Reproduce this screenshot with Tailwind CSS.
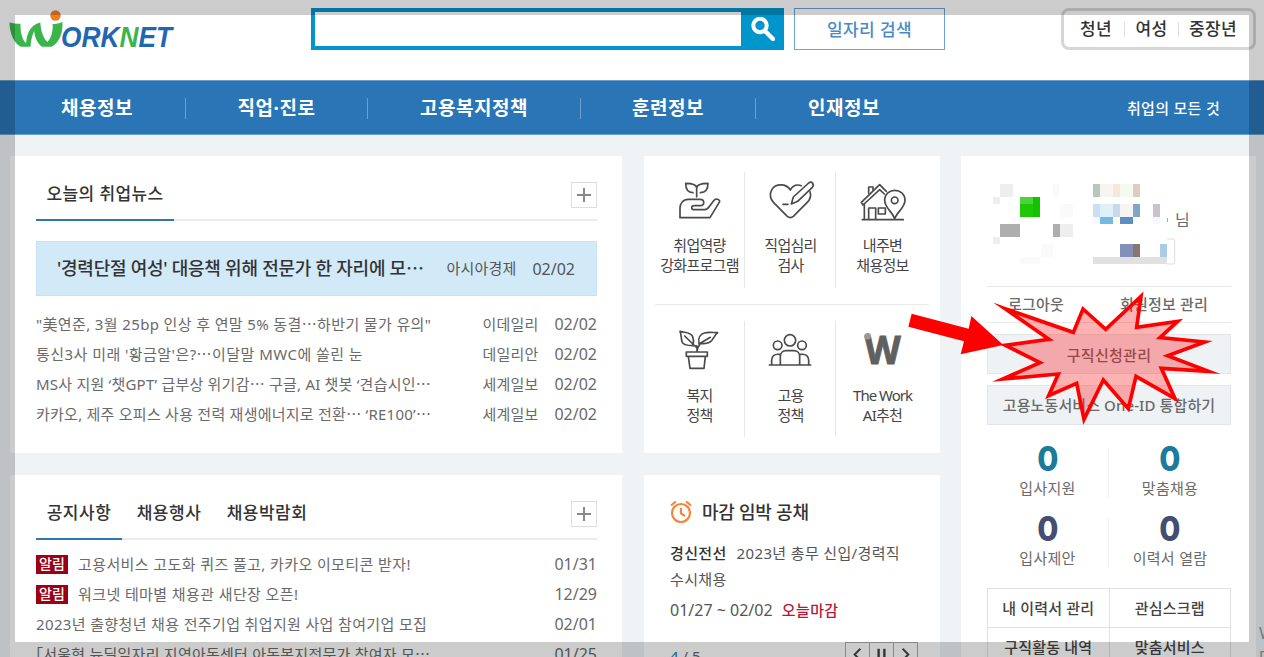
<!DOCTYPE html>
<html lang="ko">
<head>
    <meta charset="UTF-8">
    <meta name="viewport" content="width=device-width, initial-scale=1.0">
    <title>워크넷</title>
    <script src="https://cdn.jsdelivr.net/npm/@tailwindcss/browser@4"></script>
</head>
<body class="bg-[#eff3f6] font-['Noto_Sans','Noto_Sans_CJK_KR',sans-serif] text-[#6a6a6a] overflow-hidden">
<div class="relative w-[1264px] h-[657px] overflow-hidden">

    <!-- 헤더 -->
    <header class="flex h-20 bg-white pt-2 pl-[9px]">
        <svg class="w-[170px] h-[42px] shrink-0" viewBox="9 8 170 42">
            <path fill="#39b54a" d="M9.500 22.500c3.500 1 7 1.200 11 1.300-.2 8 1.500 15.500 5.500 19.500 1-10 4-18 14-20.800-5.500 6-8.700 13-9.500 24.300h-9.500c-7-3-11.500-14-11.500-24.300z"/>
            <path fill="#39b54a" d="M34 29c1.500-3 3.500-5 6.300-6.500.5 8 2.500 15 7.200 19.500 4-4.500 5.500-11 5.200-18 3.500 0 6.500-.6 9.800-2 .5 11-3 20.500-11 24.800H42c-5-4-7.500-9.500-8-17.800z"/>
            <circle cx="55.500" cy="15.500" r="5.200" fill="#f47b20"/>
            <text x="61" y="47" font-family="Liberation Sans" font-size="29" font-weight="700" font-style="italic" fill="#2167b0" textLength="111" lengthAdjust="spacingAndGlyphs">ORK<tspan fill="#39b54a">N</tspan>ET</text>
        </svg>
        <div class="flex ml-[132px] w-[473px] h-[42px] border-4 border-r-0 border-[#0095cb]">
            <input type="text" class="flex-1 outline-none">
            <button class="w-[43px] -my-1 bg-[#0095cb] flex items-center justify-center">
                <svg class="w-6 h-6" viewBox="0 0 24 24" fill="none" stroke="#fff">
                    <circle cx="9" cy="8.500" r="6.700" stroke-width="4"/>
                    <path d="M14 14l8 8" stroke-width="4.500" stroke-linecap="round"/>
                </svg>
            </button>
        </div>
        <button class="ml-[10px] w-[151px] h-[42px] border-[1.5px] border-[#6ba3d6] text-[17px] leading-none font-medium tracking-[.4px] text-[#4b8ac9]">일자리 검색</button>
        <div class="flex items-center ml-[116px] w-[195px] h-[42px] border-[3px] border-[#d6d6d6] rounded-lg pr-[6px] text-[17px] font-medium tracking-[.3px] text-[#333]">
            <span class="w-[60px] pl-4">청년</span>
            <i class="w-px h-[15px] bg-[#ddd]"></i>
            <span class="w-[53px] text-center">여성</span>
            <i class="w-px h-[15px] bg-[#ddd]"></i>
            <span class="flex-1 text-center">중장년</span>
        </div>
    </header>

    <!-- 메인 메뉴 -->
    <nav class="flex items-center h-[55px] pt-px pl-[9px] pr-11 bg-[#2a75b5] border-y border-[#6b9fcc] text-white text-[19px] font-bold tracking-[.5px] text-center">
        <a class="w-[176px]">채용정보</a>
        <i class="w-px h-[21px] bg-[#6b9fcc]"></i>
        <a class="w-[181px]">직업·진로</a>
        <i class="w-px h-[21px] bg-[#6b9fcc]"></i>
        <a class="w-[212px]">고용복지정책</a>
        <i class="w-px h-[21px] bg-[#6b9fcc]"></i>
        <a class="w-[174px]">훈련정보</a>
        <i class="w-px h-[21px] bg-[#6b9fcc]"></i>
        <a class="w-[176px]">인재정보</a>
        <a class="ml-auto text-[15px] font-medium tracking-[.3px]">취업의 모든 것</a>
    </nav>

    <main class="flex pt-[21px] pl-[10px]">
        <!-- 왼쪽: 뉴스, 공지 -->
        <div class="w-[612px] space-y-[22px]">
            <section class="h-[297px] bg-white pl-[26px] pr-[25px]">
                <div class="flex justify-between h-[65px] bg-[linear-gradient(#ebebeb,#ebebeb)] bg-[length:100%_2px] bg-[position:0_63px] bg-no-repeat">
                    <h2 class="w-[138px] pt-[26px] text-center text-[17px] leading-6 font-medium tracking-[.4px] text-[#333] border-b-2 border-[#2f76b5]">오늘의 취업뉴스</h2>
                    <button class="mt-[26px] w-[26px] h-[26px] border border-[#ddd] flex items-center justify-center">
                        <svg class="w-[14px] h-[14px]" viewBox="0 0 14 14" stroke="#888" stroke-width="2"><path d="M7 0v14M0 7h14"/></svg>
                    </button>
                </div>
                <div class="flex items-center mt-[20px] h-[55px] bg-[#d2e9f8] border border-[#c6e2f4] pl-[20px] pr-[21px] text-[15px] text-[#555]">
                    <b class="flex-1 text-[18px] font-medium tracking-[-.25px] text-[#333] whitespace-nowrap">'경력단절 여성' 대응책 위해 전문가 한 자리에 모⋯</b>
                    <span class="mr-4 tracking-[.2px]">아시아경제</span>
                    <span class="text-[16px]">02/02</span>
                </div>
                <ul class="mt-[13px] text-[15px] leading-[30px] whitespace-nowrap">
                    <li class="flex"><span class="flex-1 tracking-[.37px]">"美연준, 3월 25bp 인상 후 연말 5% 동결⋯하반기 물가 유의"</span><span class="mr-4 tracking-[.2px]">이데일리</span><span class="text-[16px]">02/02</span></li>
                    <li class="flex"><span class="flex-1 tracking-[.45px]">통신3사 미래 '황금알'은?⋯이달말 MWC에 쏠린 눈</span><span class="mr-4 tracking-[.2px]">데일리안</span><span class="text-[16px]">02/02</span></li>
                    <li class="flex"><span class="flex-1 tracking-[.22px]">MS사 지원 ‘챗GPT’ 급부상 위기감⋯ 구글, AI 챗봇 ‘견습시인⋯</span><span class="mr-4 tracking-[.2px]">세계일보</span><span class="text-[16px]">02/02</span></li>
                    <li class="flex"><span class="flex-1 tracking-[.25px]">카카오, 제주 오피스 사용 전력 재생에너지로 전환⋯ ‘RE100’⋯</span><span class="mr-4 tracking-[.2px]">세계일보</span><span class="text-[16px]">02/02</span></li>
                </ul>
            </section>

            <section class="h-[297px] bg-white pl-[26px] pr-[25px]">
                <div class="flex h-[65px] bg-[linear-gradient(#ebebeb,#ebebeb)] bg-[length:100%_2px] bg-[position:0_63px] bg-no-repeat text-[17px] leading-6 font-medium tracking-[.5px] text-[#333] text-center">
                    <h2 class="w-[86px] pt-[26px] border-b-2 border-[#2f76b5]">공지사항</h2>
                    <h2 class="w-[94px] pt-[26px]">채용행사</h2>
                    <h2 class="w-[102px] pt-[26px]">채용박람회</h2>
                    <button class="ml-auto mt-[26px] w-[26px] h-[26px] border border-[#ddd] flex items-center justify-center">
                        <svg class="w-[14px] h-[14px]" viewBox="0 0 14 14" stroke="#888" stroke-width="2"><path d="M7 0v14M0 7h14"/></svg>
                    </button>
                </div>
                <ul class="mt-[9px] text-[15px] leading-[30px] whitespace-nowrap">
                    <li class="flex items-center"><em class="w-8 h-[19px] mr-[10px] bg-[#9b0014] text-center not-italic text-[14px] font-medium leading-[18px] text-white">알림</em><span class="flex-1 tracking-[.4px]">고용서비스 고도화 퀴즈 풀고, 카카오 이모티콘 받자!</span><span class="text-[16px]">01/31</span></li>
                    <li class="flex items-center"><em class="w-8 h-[19px] mr-[10px] bg-[#9b0014] text-center not-italic text-[14px] font-medium leading-[18px] text-white">알림</em><span class="flex-1 tracking-[.4px]">워크넷 테마별 채용관 새단장 오픈!</span><span class="text-[16px]">12/29</span></li>
                    <li class="flex"><span class="flex-1 tracking-[.36px]">2023년 출향청년 채용 전주기업 취업지원 사업 참여기업 모집</span><span class="text-[16px]">02/01</span></li>
                    <li class="flex"><span class="flex-1 -ml-2 tracking-[.24px]">「서울형 뉴딜일자리 지역아동센터 아동복지전문가 참여자 모⋯</span><span class="text-[16px]">01/25</span></li>
                </ul>
            </section>
        </div>

        <!-- 가운데: 바로가기, 마감 임박 -->
        <div class="ml-[22px] w-[296px] space-y-[22px]">
            <section class="h-[297px] bg-white pt-4 px-[11px] text-center text-[15px] leading-5 tracking-[-.7px] text-[#444]">
                <div class="grid grid-cols-[90px_91px_92px] h-[116px] divide-x divide-[#e8e8e8]">
                    <a class="flex flex-col items-center pt-2">
                        <svg class="w-[50px] h-11 mb-[11px] shrink-0" viewBox="106 90 150 132" fill="none" stroke="#4a4a4a" stroke-width="5" stroke-linejoin="round" stroke-linecap="round">
                            <path d="M171 140v-26c0-8-9-14-33-14 0 18 8 28 22 28M171 114c0-8 11-14 34-14 0 18-8 28-23 28"/>
                            <path d="M121 203v-28c0-15 9-27 25-27h35c15 0 15 19 0 19h-16c-12 0-12 12 0 12h31c7 0 10-5 14-11l12-16c6-8 18-4 18 3l-29 48z"/>
                        </svg>
                        취업역량<span class="-mx-2 whitespace-nowrap">강화프로그램</span>
                    </a>
                    <a class="flex flex-col items-center pt-2 pl-px">
                        <svg class="w-[50px] h-11 mb-[11px] shrink-0" viewBox="378 90 150 132" fill="none" stroke="#4a4a4a" stroke-width="5" stroke-linejoin="round" stroke-linecap="round">
                            <path d="M484 107c-15-5-27 2-33 13-14-22-45-18-55-2-9 14-5 30 5 40l41 41c6 5 12 5 18 0l41-41c9-9 13-21 9-33M429 163h15"/>
                            <path d="M454 162l6-21 46-42c10-7 18 4 11 13l-44 42z"/>
                        </svg>
                        직업심리<br>검사
                    </a>
                    <a class="flex flex-col items-center pt-2 pl-px">
                        <svg class="w-[50px] h-11 mb-[11px] shrink-0" viewBox="653 90 150 132" fill="none" stroke="#4a4a4a" stroke-width="5" stroke-linejoin="round" stroke-linecap="round">
                            <path d="M666 209h123M672 163v45M685 208v-34h21v34M714 174h21v18h-21zM685 130v-19h13v9"/>
                            <path d="M668 165l-5-8 55-53 20 20M668 165l50-46 14 13"/>
                            <path d="M763 207c-5-20-30-33-30-56 0-40 61-40 61 0 0 23-26 36-31 56z"/>
                            <circle cx="763" cy="151" r="10"/>
                        </svg>
                        내주변<br>채용정보
                    </a>
                </div>
                <div class="h-px mt-4 mb-4 bg-[#e8e8e8]"></div>
                <div class="grid grid-cols-[90px_91px_92px] h-[116px] divide-x divide-[#e8e8e8]">
                    <a class="flex flex-col items-center pt-2">
                        <svg class="w-[50px] h-11 mb-[12px] shrink-0" viewBox="105 86 150 132" fill="none" stroke="#4a4a4a" stroke-width="5" stroke-linejoin="round" stroke-linecap="round">
                            <path d="M171 153v-16c-8-3-41 4-45-13-3-11-2-22-6-31 16 5 31 1 38 16 3 8 3 18 1 25M134 107l37 36M171 153c0-8 3-14 8-20M177 128c-3-14 3-26 16-30 12-4 27-1 40-1-11 8-12 21-23 28-9 6-24 5-33 5zM177 131l34-20"/>
                            <path d="M139 155h63v13h-63zM145 168l5 36h42l4-36"/>
                        </svg>
                        복지<br>정책
                    </a>
                    <a class="flex flex-col items-center pt-2 pl-px">
                        <svg class="w-[50px] h-11 mb-[12px] shrink-0" viewBox="379 86 150 132" fill="none" stroke="#4a4a4a" stroke-width="5" stroke-linejoin="round" stroke-linecap="round">
                            <circle cx="451" cy="120" r="17"/><circle cx="414" cy="135" r="13"/><circle cx="487" cy="135" r="13"/>
                            <path d="M389 194h124M396 194v-14c0-12 7-20 24-18M507 194v-14c0-12-7-20-24-18M422 194v-26c0-10 7-17 17-17h24c10 0 17 7 17 17v26"/>
                        </svg>
                        고용<br>정책
                    </a>
                    <a class="flex flex-col items-center pt-2 pl-px">
                        <svg class="w-[50px] h-11 mb-[12px] shrink-0" viewBox="653 86 150 132">
                            <text x="673" y="191" font-family="Noto Sans" font-size="117" font-weight="700" fill="#606060" stroke="#606060" stroke-width="3" letter-spacing="0" textLength="108" lengthAdjust="spacingAndGlyphs">W</text>
                            <circle cx="682" cy="108" r="10" fill="#999"/>
                        </svg>
                        <span class="tracking-[-1px]">The Work</span>AI추천
                    </a>
                </div>
            </section>

            <section class="h-[297px] bg-white pt-6 pl-[26px] pr-[22px] text-[15px]">
                <h2 class="flex items-center h-[26px] text-[18px] font-medium tracking-[-.25px] text-[#333]">
                    <svg class="w-[22px] h-[22px] mr-[10px]" viewBox="0 0 22 22" fill="none" stroke="#f5853b" stroke-width="2.200">
                        <circle cx="11" cy="12" r="9"/><path d="M11 7v5.500l4 2.500M1 4.500l5-4M21 4.500l-5-4" stroke-width="2.200"/>
                    </svg>
                    마감 임박 공채
                </h2>
                <p class="mt-[15px] leading-[26px] tracking-[.35px] text-[#555] whitespace-nowrap"><b class="mr-[10px] font-medium text-[#333]">경신전선</b>2023년 총무 신입/경력직<br>수시채용</p>
                <p class="mt-[5px] leading-[26px] text-[16px] text-[#555] whitespace-nowrap">01/27 ~ 02/02 <b class="ml-[5px] text-[15px] font-medium tracking-[.4px] text-[#b5183a]">오늘마감</b></p>
                <div class="flex justify-between mt-[19px]">
                    <span class="pt-[3px]"><span class="text-[#2a75b5]">4</span> / 5</span>
                    <div class="flex w-[73px] h-[25px] border border-[#aaa] divide-x divide-[#aaa]">
                        <svg class="flex-1" viewBox="0 0 24 24" fill="none" stroke="#444" stroke-width="2"><path d="M15 6l-6 6 6 6"/></svg>
                        <svg class="flex-1" viewBox="0 0 24 24" fill="none" stroke="#444" stroke-width="2.500"><path d="M9 6v10M15 6v10"/></svg>
                        <svg class="flex-1" viewBox="0 0 24 24" fill="none" stroke="#444" stroke-width="2"><path d="M9 6l6 6-6 6"/></svg>
                    </div>
                </div>
            </section>
        </div>

        <!-- 오른쪽: 회원 정보 -->
        <section class="ml-[21px] w-[295px] h-[520px] bg-white pl-[26px] pr-[25px] pt-7">
            <div class="relative h-[103px] border-b border-[#e8e8e8]">
                <!-- 모자이크 처리된 프로필 -->
                <svg class="w-[244px] h-[92px]" viewBox="111 102 732 276" shape-rendering="crispEdges">
                    <path fill="#eee" d="M150 102h39v39h-39zM129 141h21v20h-21zM330 222h39v39h-39zM129 261h21v21h-21z"/>
                    <path fill="#fafafa" d="M309 102h18v39h-18zM330 162h39v39h-39zM210 321h60v21h-60zM273 282h36v39h-36z"/>
                    <path fill="#4bd43a" d="M210 141h39v21h-39z"/>
                    <path fill="#1ec806" d="M210 162h39v39h-39z"/>
                    <path fill="#12c400" d="M249 141h21v60h-21z"/>
                    <path fill="#aeaeae" d="M150 222h60v39h-60zM309 222h21v39h-21z"/>
                    <path fill="#b5c8bd" d="M429 102h21v39h-21z"/>
                    <path fill="#f8f4f1" d="M450 102h39v39h-39zM510 162h39v39h-39z"/>
                    <path fill="#f5e8d8" d="M489 102h21v39h-21z"/>
                    <path fill="#f5faf0" d="M510 102h39v39h-39z"/>
                    <path fill="#dccdc0" d="M549 102h21v39h-21z"/>
                    <path fill="#cbdff0" d="M429 162h21v39h-21z"/>
                    <path fill="#e0f0f9" d="M450 162h39v39h-39z"/>
                    <path fill="#c8d9e9" d="M489 162h21v39h-21z"/>
                    <path fill="#81a6cc" d="M549 162h21v39h-21z"/>
                    <path fill="#cdc0cf" d="M609 162h21v39h-21z"/>
                    <path fill="#f4f9fd" d="M429 201h21v21h-21zM609 201h21v21h-21z"/>
                    <path fill="#75bae3" d="M450 201h39v21h-39zM651 204h4v13h-4z"/>
                    <path fill="#fdfde8" d="M489 201h21v21h-21z"/>
                    <path fill="#5a8fc0" d="M510 201h39v21h-39z"/>
                    <path fill="#8290b9" d="M510 282h39v39h-39z"/>
                    <path fill="#867871" d="M549 282h21v39h-21z"/>
                    <path fill="#a9cce3" d="M630 282h21v39h-21z"/>
                    <path fill="#e1e1e1" d="M429 321h222v21h-222z"/>
                    <path fill="none" stroke="#ddd" stroke-width="3" shape-rendering="auto" d="M651 267h17q6 0 6 6v63q0 6-6 6h-17"/>
                </svg>
                <span class="absolute left-[188px] top-[24px] text-[16px]">님</span>
            </div>
            <div class="flex h-9 border-b border-[#e8e8e8] text-[15px] leading-[35px] font-medium tracking-[.2px]">
                <a class="w-[98px] text-center">로그아웃</a>
                <a class="flex-1 pl-[35px]">회원정보 관리</a>
            </div>
            <a class="block mt-[11px] h-10 border border-[#e2e6e9] bg-[#eef2f5] text-center text-[15px] leading-[40px] font-medium tracking-[.3px]">구직신청관리</a>
            <a class="block mt-[11px] h-10 border border-[#e2e6e9] bg-[#eef2f5] text-center text-[15px] leading-[38px] font-medium tracking-[.1px] whitespace-nowrap">고용노동서비스 One-ID 통합하기</a>
            <div class="grid grid-cols-2 mt-[23px] gap-y-5 text-center text-[15px] tracking-[.3px] *:odd:border-r *:odd:border-[#eee]">
                <div class="h-[50px]"><b class="block h-[29px] font-['Inter'] text-[34px] leading-[22px] font-extrabold text-[#1a7b9b]"><span class="inline-block scale-x-90">0</span></b><span class="block leading-[22px]">입사지원</span></div>
                <div class="h-[50px]"><b class="block h-[29px] font-['Inter'] text-[34px] leading-[22px] font-extrabold text-[#1a7b9b]"><span class="inline-block scale-x-90">0</span></b><span class="block leading-[22px]">맞춤채용</span></div>
                <div class="h-[50px]"><b class="block h-[29px] font-['Inter'] text-[34px] leading-[22px] font-extrabold text-[#434f72]"><span class="inline-block scale-x-90">0</span></b><span class="block leading-[22px]">입사제안</span></div>
                <div class="h-[50px]"><b class="block h-[29px] font-['Inter'] text-[34px] leading-[22px] font-extrabold text-[#434f72]"><span class="inline-block scale-x-90">0</span></b><span class="block leading-[22px]">이력서 열람</span></div>
            </div>
            <div class="grid grid-cols-2 mt-5 border-t border-l border-[#e1e1e1] text-center text-[15px] leading-[38px] font-medium tracking-[.2px] text-[#444] *:border-r *:border-b *:border-[#e1e1e1]">
                <a>내 이력서 관리</a>
                <a>관심스크랩</a>
                <a>구직활동 내역</a>
                <a>맞춤서비스</a>
            </div>
        </section>
    </main>

    <!-- 오른쪽 가장자리에 걸린 퀵메뉴 글자 -->
    <div class="absolute left-[1259px] top-[621px] text-[17px] leading-[24px] text-[#999]">W<br>[</div>

    <!-- 화면 테두리 음영 -->
    <div class="absolute inset-0 border-[15px] border-black/20"></div>

    <!-- 강조 표시 -->
    <svg class="absolute left-[900px] top-[285px] w-[364px] h-[150px]" viewBox="0 0 1092 450">
        <path fill="#f00" d="M35 86l171 45 8-38 96 87-128 28 10-39-167-44z"/>
        <path fill="#f00" fill-opacity=".3" stroke="#f00" stroke-width="11" stroke-miterlimit="20" d="M315 71L520 142 549 72 617 133 723 34 710 127 833 109 780 158 914 171 803 212 926 259 784 250 825 341 708 274 685 371 610 285 552 403 530 295 446 332 475 267 309 282 420 233 316 181 447 163z"/>
    </svg>
</div>
</body>
</html>
